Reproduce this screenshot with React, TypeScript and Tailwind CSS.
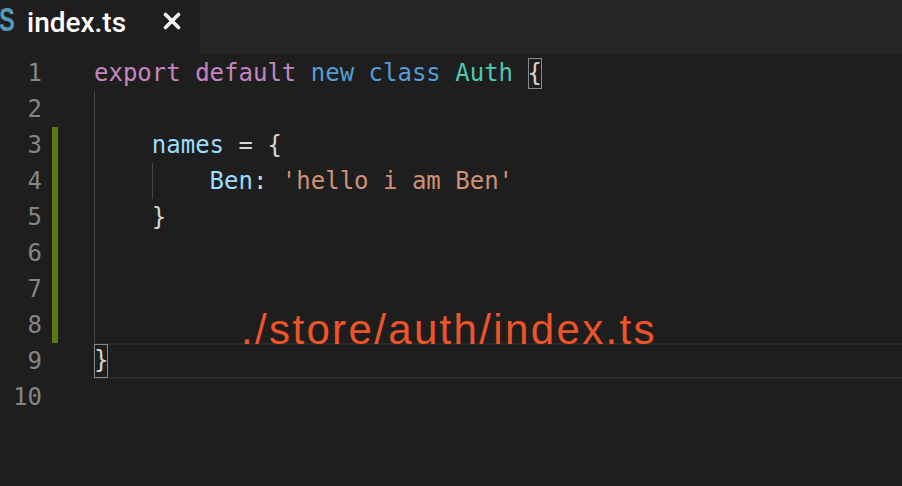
import React from "react";

type Tok = { t: string; c: string };

const KW = "text-[#c586c0]";
const BL = "text-[#569cd6]";
const TY = "text-[#4ec9b0]";
const VA = "text-[#9cdcfe]";
const ST = "text-[#ce9178]";
const PL = "text-[#d4d4d4]";

type Line = {
  guides: number;
  tokens: Tok[];
  changed?: boolean;
  current?: boolean;
  box?: string;
};

const lines: Line[] = [
  {
    guides: 0,
    tokens: [
      { t: "export ", c: KW },
      { t: "default ", c: KW },
      { t: "new ", c: BL },
      { t: "class ", c: BL },
      { t: "Auth ", c: TY },
    ],
    box: "{",
  },
  { guides: 1, tokens: [] },
  {
    guides: 1,
    changed: true,
    tokens: [
      { t: "    names", c: VA },
      { t: " = {", c: PL },
    ],
  },
  {
    guides: 2,
    changed: true,
    tokens: [
      { t: "Ben", c: VA },
      { t: ": ", c: PL },
      { t: "'hello i am Ben'", c: ST },
    ],
  },
  { guides: 1, changed: true, tokens: [{ t: "    }", c: PL }] },
  { guides: 1, changed: true, tokens: [] },
  { guides: 1, changed: true, tokens: [] },
  { guides: 1, changed: true, tokens: [] },
  { guides: 0, current: true, tokens: [], box: "}" },
  { guides: 0, tokens: [] },
];

function CodeRow({ line, n }: { line: Line; n: number }) {
  return (
    <div className="flex h-9">
      <div className="w-[42px] text-right leading-9 text-[#858585]">{n}</div>
      <div className={`ml-[10px] w-[6px] ${line.changed ? "bg-[#587c0c]" : ""}`} />
      <div className="w-[36px]" />
      <div
        className={`flex flex-1 items-center ${
          line.current ? "border-y-2 border-[#2b2b2b]" : ""
        }`}
      >
        {/* indent guides */}
        {Array.from({ length: line.guides }).map((_, i) => (
          <div key={i} className="w-[57.8px] self-stretch border-l border-[#454545]" />
        ))}
        {line.tokens.map((tk, i) => (
          <span key={i} className={`whitespace-pre leading-9 ${tk.c}`}>
            {line.guides === 1 ? tk.t.replace(/^ {4}/, "") : tk.t}
          </span>
        ))}
        {line.box && (
          <span
            className={`inline-block w-[14.45px] text-center text-[#d4d4d4] shadow-[inset_0_0_0_1px_#8a8a8a] ${
              line.current ? "h-[34px] leading-[32px]" : "h-[31px] leading-[31px]"
            }`}
          >
            {line.box}
          </span>
        )}
      </div>
    </div>
  );
}

export default function App() {
  return (
    <div className="relative h-[486px] w-[902px] overflow-hidden bg-[#1e1e1e]">
      {/* tab strip */}
      <div className="flex h-[55px] bg-[#252526]">
        <div className="relative flex w-[200px] items-start bg-[#1e1e1e]">
          <span className="ml-[-1px] mt-[1px] inline-block w-[15px] origin-left scale-x-[0.72] font-['Liberation_Sans',sans-serif] text-[33px] font-bold leading-[38px] text-[#519aba]">
            S
          </span>
          <span className="ml-[13px] mt-[2px] font-['Roboto',sans-serif] text-[28px] font-medium text-white">
            index.ts
          </span>
          <svg
            className="absolute left-[163px] top-[12px]"
            width="18"
            height="18"
            viewBox="0 0 18 18"
          >
            <path d="M2.5 2.5 L15.5 15.5 M15.5 2.5 L2.5 15.5" stroke="#f2f2f2" strokeWidth="3.6" strokeLinecap="round" />
          </svg>
        </div>
      </div>

      {/* editor */}
      <div className="font-['DejaVu_Sans_Mono',monospace] text-[24px]">
        {lines.map((l, i) => (
          <CodeRow key={i} line={l} n={i + 1} />
        ))}
      </div>

      <div className="absolute left-[241px] top-[309px] font-['Liberation_Sans',sans-serif] text-[42px] leading-none tracking-[2.35px] text-[#ef5428]">
        ./store/auth/index.ts
      </div>
    </div>
  );
}
